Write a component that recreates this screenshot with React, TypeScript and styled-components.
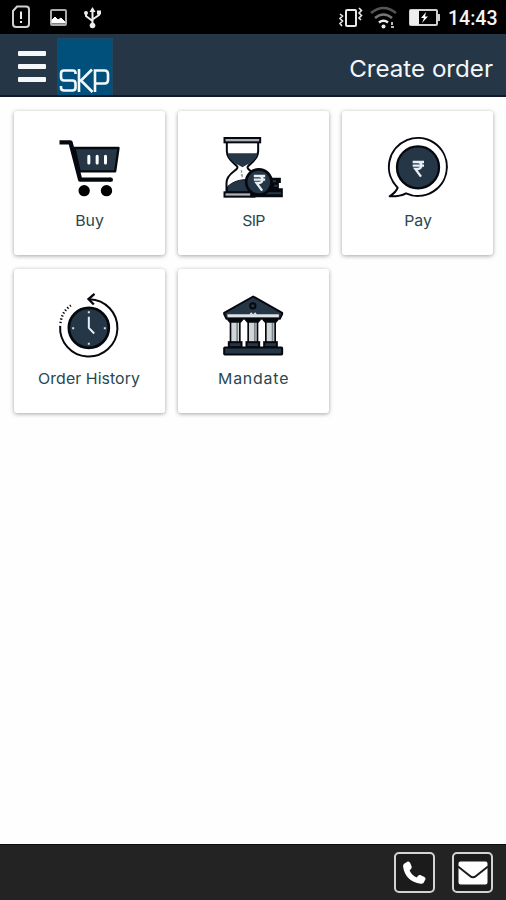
import React from "react";
import styled, { createGlobalStyle } from "styled-components";

const NAVY = "#253746";
const INK = "#05080e";

const GlobalStyle = createGlobalStyle`
  * { box-sizing: border-box; }
  body { margin: 0; background: #fefefe; font-family: Inter, "Open Sans", sans-serif; }
`;

const Screen = styled.div`
  width: 100%;
  height: 100vh;
  min-height: 900px;
  display: flex;
  flex-direction: column;
  background: #fefefe;
  overflow: hidden;
`;

const StatusBar = styled.div`
  height: 34px;
  flex: none;
  background: #000;
  display: flex;
  justify-content: space-between;
  align-items: center;
  padding: 0 8px 0 8px;

  svg { display: block; }
`;

const StatusRight = styled.div`
  display: flex;
  align-items: center;
  gap: 7px;
`;

const Clock = styled.span`
  font: 500 19.5px/34px Roboto, sans-serif;
  color: #f4f4f4;
  padding-top: 3px;
  width: 50px;
  white-space: nowrap;
`;

const Header = styled.header`
  height: 63px;
  flex: none;
  background: ${NAVY};
  border-bottom: 2px solid #101a29;
  display: flex;
  align-items: flex-start;
  padding: 0 13px 0 18px;
`;

const MenuButton = styled.button`
  width: 28px;
  height: 31px;
  margin: 17px 11px 0 0;
  padding: 0;
  border: 0;
  background: none;
  display: flex;
  flex-direction: column;
  justify-content: space-between;
`;

const MenuBar = styled.span`
  display: block;
  height: 5px;
  width: 28px;
  border-radius: 1px;
  background: #f5f7f9;
`;

const Logo = styled.div`
  width: 56px;
  height: 57px;
  margin-top: 4px;
  background: #01507c;
  border: 1px solid #1d4866;
  border-bottom: 0;

  svg { display: block; }
`;

const Title = styled.h1`
  margin: 17px 0 0 auto;
  font-size: 23px;
  font-weight: 400;
  line-height: 36px;
  transform: scaleX(1.05);
  transform-origin: right center;
  color: #f5f7fa;
  white-space: nowrap;
`;

const Grid = styled.main`
  flex: 1;
  display: grid;
  grid-template-columns: repeat(3, 1fr);
  grid-auto-rows: 144px;
  gap: 13.5px;
  align-content: start;
  padding: 14px 13px 0 14px;
`;

const Card = styled.div`
  background: #fff;
  border-radius: 3px;
  box-shadow: 0 1px 4px rgba(0, 0, 0, 0.36);
  display: flex;
  flex-direction: column;
  align-items: center;
  padding-top: 23px;
`;

const CardIcon = styled.svg`
  width: 64px;
  height: 68px;
  display: block;
  overflow: visible;
`;

const Label = styled.span<{ $spacing: number }>`
  margin-top: 7px;
  margin-right: ${(p) => -p.$spacing}px;
  font-size: 15px;
  line-height: 24px;
  letter-spacing: ${(p) => p.$spacing}px;
  transform: scaleX(1.06);
  color: #294750;
  white-space: nowrap;
`;

const Footer = styled.footer`
  height: 56px;
  flex: none;
  background: #232323;
  border-top: 1px solid #0c0c0c;
  display: flex;
  justify-content: flex-end;
  gap: 17px;
  padding: 7px 13px 0 0;
`;

const ContactButton = styled.button`
  width: 41px;
  height: 41px;
  padding: 0;
  border: 2px solid #d3d3d3;
  border-radius: 5px;
  background: #1b1b1b;
  display: flex;
  align-items: center;
  justify-content: center;

  svg { display: block; flex: none; }
`;

const StatusIconsLeft = () => (
  <svg width="100" height="34" viewBox="8 0 100 34" fill="none" stroke="#d0d0d0" strokeWidth="2">
    <path d="M17 6.500H26Q29 6.500 29 9.500V24Q29 27 26 27H16Q13 27 13 24V11Z" />
    <path d="M21 11.500V19M21 21V23" stroke="#eee" />
    <rect x="51" y="10" width="15" height="15" rx="1" stroke="#aaa" />
    <path d="M52 23V20L55 17L58 20L61 18L65 22V23Z" fill="#fff" stroke="#fff" strokeWidth="1" />
    <path d="M92.500 9V25M86 13V16L92.500 21M99 13V15L92.500 19.500" stroke="#eee" />
    <path d="M89.500 12L92.500 7L95.500 12Z" fill="#eee" stroke="none" />
    <circle cx="92.500" cy="25.500" r="2.800" fill="#eee" stroke="none" />
    <circle cx="86" cy="13" r="2" fill="#eee" stroke="none" />
    <path d="M97 10.500h4v4h-4z" fill="#eee" stroke="none" />
  </svg>
);

const StatusIconsRight = () => (
  <svg width="103" height="34" viewBox="338 0 103 34" fill="none" stroke="#e8e8e8" strokeWidth="2">
    <rect x="346" y="10" width="10" height="16" rx="1" />
    <path d="M340 14L342.500 16L340 18.500L342.500 21L340 23.500L342 26M359 8L361.500 10.500L359 13L361.500 15.500L359 18L361 20" strokeWidth="1.600" />
    <path d="M371 13Q383.500 3 396 13" stroke="#555" strokeWidth="2.500" />
    <path d="M375 18Q383.500 11 392 18" stroke="#777" strokeWidth="2.500" />
    <path d="M379 22.500Q383.500 19 388 22.500" stroke="#eee" strokeWidth="2.500" />
    <circle cx="383.500" cy="26.500" r="2" fill="#eee" stroke="none" />
    <path d="M392 22v3M391 27h3" stroke="#bbb" />
    <rect x="410" y="10" width="27" height="15" rx="1" stroke="#d0d0d0" />
    <path d="M410 10H419V25H410Z" fill="#eee" stroke="none" />
    <path d="M439 14V21" stroke="#d0d0d0" />
    <path d="M426 12L421 18H424L422 23L428 16.500H425Z" fill="#fff" stroke="none" />
  </svg>
);

const LogoMark = () => (
  <svg width="54" height="56" viewBox="58 39 54 56" fill="none" stroke="#f4f8fb" strokeWidth="2.600">
    <title>SKP</title>
    <path d="M75.500 74V73Q75.500 70.500 73 70.500H64Q61 70.500 61 73.500V77Q61 80.500 64 80.500H72.500Q75.500 80.500 75.500 83.500V87.500Q75.500 90.500 72.500 90.500H64Q61 90.500 61 87.500V86" />
    <path d="M79 69V92M92 69.500L81 80.500L92.500 92" />
    <path d="M95 92V70.500H104.500Q108 70.500 108 74V80Q108 83.500 104.500 83.500H95" />
  </svg>
);

const Rupee = ({ x, y }: { x: number; y: number }) => (
  <g transform={`translate(${x} ${y})`} fill="none" stroke="#e6eef6" strokeWidth="7">
    <path d="M-17 -20H17M-17 -9H17M-8 -20H-1Q9 -20 9 -10Q9 1 -2 1H-9L8 24" />
  </g>
);

const CartIcon = () => (
  <CardIcon viewBox="172.500 102 192 204">
    <path d="M225 144H357L347 214H240Z" fill={NAVY} stroke={INK} strokeWidth="7" strokeLinejoin="round" />
    <path d="M180 127H213L242 239H334" fill="none" stroke={INK} strokeWidth="13" strokeLinejoin="round" />
    <circle cx="334" cy="239" r="6.500" fill={INK} />
    <path d="M268 169V189M293 169V189M318 169V189" stroke="#fff" strokeWidth="9" strokeLinecap="round" />
    <circle cx="254" cy="272" r="17" fill="#000" />
    <circle cx="321" cy="272" r="17" fill="#000" />
  </CardIcon>
);

const SipIcon = () => (
  <CardIcon viewBox="152.500 102 192 204">
    <path d="M170 126V153C170 184 202 193 202 202C202 213 169 219 169 249V278H264V249C264 219 232 213 232 202C232 193 264 184 264 153V126Z" fill="#fff" stroke={INK} strokeWidth="6" />
    <path d="M172 160H262C258 185 233 192 217 202C200 192 175 183 172 160Z" fill={NAVY} />
    <path d="M172 276V260C188 245 208 238 235 239V276Z" fill={NAVY} stroke={INK} strokeWidth="3" />
    <path d="M214 211V218M212 225H216V232" stroke="#8b9297" strokeWidth="4" fill="none" />
    <rect x="163" y="114" width="107" height="13" fill="#aab0b4" stroke={INK} strokeWidth="6" />
    <rect x="163" y="277" width="90" height="13" fill="#aab0b4" stroke={INK} strokeWidth="6" />
    <path d="M290 233H332V249H326V265H338V292H240V272H290Z" fill={INK} />
    <path d="M306 244H318M312 257H322M285 280H333" stroke={NAVY} strokeWidth="6" />
    <circle cx="266" cy="246" r="38" fill={NAVY} stroke={INK} strokeWidth="8" />
    <Rupee x={268} y={248} />
  </CardIcon>
);

const PayIcon = () => (
  <CardIcon viewBox="150 102 192 204">
    <path d="M185 263A87 87 0 1 1 210 280Q192 290 161 289Q181 276 185 263Z" fill="#fff" stroke={INK} strokeWidth="6" strokeLinejoin="round" />
    <circle cx="246" cy="202" r="63" fill={NAVY} stroke={INK} strokeWidth="7" />
    <Rupee x={247} y={206} />
  </CardIcon>
);

const HistoryIcon = () => (
  <CardIcon viewBox="172.500 88.500 192 204">
    <circle cx="268" cy="196" r="60" fill={NAVY} stroke={INK} strokeWidth="8" />
    <path d="M270 110A86 86 0 1 1 182 190" fill="none" stroke={INK} strokeWidth="6" />
    <path d="M183 182Q187 147 214 129" fill="none" stroke={INK} strokeWidth="7" strokeDasharray="4 6" />
    <path d="M285 94L267 110L283 126" fill="none" stroke={INK} strokeWidth="7" />
    <path d="M268 163V196L284 213" fill="none" stroke="#e6edf4" strokeWidth="6" />
    <path d="M265 149H271M265 244H271M218 197H224M313 197H319" stroke="#d5dfe8" strokeWidth="6" />
  </CardIcon>
);

const BankIcon = () => (
  <CardIcon viewBox="154.500 88.500 192 204">
    <path d="M164 151L251 102L338 151V155L331 169H171L164 155Z" fill={NAVY} stroke={INK} strokeWidth="6" strokeLinejoin="round" />
    <path d="M174 160H328" stroke="#dce2e5" strokeWidth="9" />
    <path d="M239 157L245 149L251 155L257 149L263 157Z" fill="#dce2e5" />
    <circle cx="250" cy="130" r="8" fill={NAVY} stroke={INK} strokeWidth="6" />
    {[197, 250, 303].map((x) => (
      <g key={x}>
        <rect x={x - 14} y="176" width="28" height="66" fill="#d0d6d8" stroke={INK} strokeWidth="5" />
        <path d={`M${x + 6} 180V238`} stroke="#7d8588" strokeWidth="5" />
        <path d={`M${x - 23} 168H${x + 23}V174L${x + 17} 181H${x - 17}L${x - 23} 174Z`} fill={INK} />
        <rect x={x - 19} y="239" width="38" height="15" fill={NAVY} stroke={INK} strokeWidth="6" />
      </g>
    ))}
    <rect x="164" y="255" width="174" height="21" rx="2" fill={NAVY} stroke={INK} strokeWidth="6" />
  </CardIcon>
);

const PhoneIcon = () => (
  <svg width="25" height="25" viewBox="0 0 24 24" fill="#fff">
    <path d="M2 3.500L5.500 1.500Q7 1 8 3L9.300 6.500Q9.600 7.500 8.600 8.600L7.300 10Q9.500 14.700 14 16.700L15.500 15Q16.500 14 17.600 14.500L21.500 16.300Q23 17 22.500 18.500L20.800 21.800Q20 23 18 22.800Q3 20.500 1 6Q.9 4.500 2 3.500Z" />
  </svg>
);

const MailIcon = () => (
  <svg width="30" height="26" viewBox="0 0 30 26">
    <rect x="0.500" y="1.500" width="29" height="23" rx="2" fill="#fff" />
    <path d="M0 6.500L12 16Q15 18.500 18 16L30 6.500" fill="none" stroke="#1b1b1b" strokeWidth="2" />
  </svg>
);

const items = [
  { label: "Buy", spacing: 0, Icon: CartIcon },
  { label: "SIP", spacing: -0.8, Icon: SipIcon },
  { label: "Pay", spacing: 0, Icon: PayIcon },
  { label: "Order History", spacing: 0.05, Icon: HistoryIcon },
  { label: "Mandate", spacing: 0.75, Icon: BankIcon },
];

export default function App() {
  return (
    <>
      <GlobalStyle />
      <Screen>
        <StatusBar>
          <StatusIconsLeft />
          <StatusRight>
            <StatusIconsRight />
            <Clock>14:43</Clock>
          </StatusRight>
        </StatusBar>
        <Header>
          <MenuButton aria-label="Menu">
            <MenuBar />
            <MenuBar />
            <MenuBar />
          </MenuButton>
          <Logo>
            <LogoMark />
          </Logo>
          <Title>Create order</Title>
        </Header>
        <Grid>
          {items.map(({ label, spacing, Icon }) => (
            <Card key={label}>
              <Icon />
              <Label $spacing={spacing}>{label}</Label>
            </Card>
          ))}
        </Grid>
        <Footer>
          <ContactButton aria-label="Call">
            <PhoneIcon />
          </ContactButton>
          <ContactButton aria-label="Email">
            <MailIcon />
          </ContactButton>
        </Footer>
      </Screen>
    </>
  );
}
